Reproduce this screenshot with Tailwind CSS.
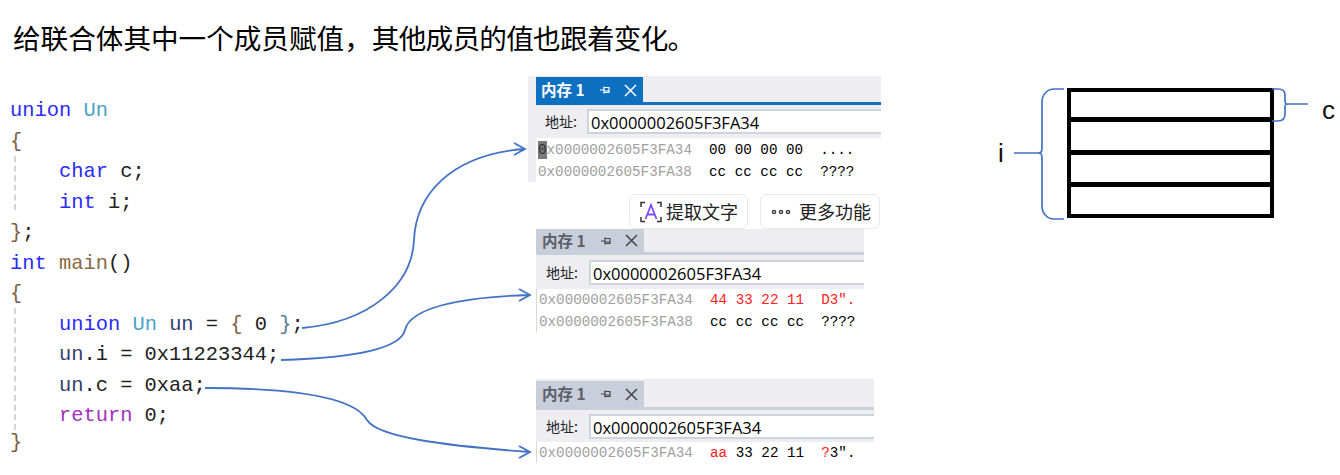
<!DOCTYPE html>
<html lang="zh-CN">
<head>
  <meta charset="UTF-8">
  <script src="https://cdn.jsdelivr.net/npm/@tailwindcss/browser@4"></script>
  <title>联合体</title>
</head>
<body class="bg-white">
  <div class="relative w-[1340px] h-[475px] overflow-hidden font-['Noto_Sans_CJK_SC',sans-serif]">
    <h1 class="h-[76px] pl-[13px] pt-[15px] text-[27.6px] leading-[44px] font-normal text-black">给联合体其中一个成员赋值，<span class="tracking-[-0.7px]">其他成员的值也跟着变化。</span></h1>

    <div class="flex">
      <!-- code -->
      <div class="relative w-[528px] pl-[10px] pt-[20px] font-['Liberation_Mono','Noto_Sans_CJK_SC',monospace] text-[20.4px] leading-[30.55px] text-[#222]">
        <div class="absolute left-[14px] top-[80px] h-[54px] border-l-2 border-dashed border-[#d4d4d4]"></div>
        <div class="absolute left-[14px] top-[232px] h-[122px] border-l-2 border-dashed border-[#d4d4d4]"></div>
        <div class="whitespace-pre"><span class="text-[#2b2bff]">union</span> <span class="text-[#4aa3c4]">Un</span></div>
        <div class="whitespace-pre text-[#7a5c48]">{</div>
        <div class="whitespace-pre">    <span class="text-[#2b2bff]">char</span> c;</div>
        <div class="whitespace-pre">    <span class="text-[#2b2bff]">int</span> i;</div>
        <div class="whitespace-pre"><span class="text-[#7a5c48]">}</span>;</div>
        <div class="whitespace-pre"><span class="text-[#2b2bff]">int</span> <span class="text-[#8a6a45]">main</span>()</div>
        <div class="whitespace-pre text-[#7a5c48]">{</div>
        <div class="whitespace-pre">    <span class="text-[#2b2bff]">union</span> <span class="text-[#4aa3c4]">Un</span> <span class="text-[#34406e]">un</span> = <span class="text-[#7a5c48]">{</span> 0 <span class="text-[#5a7a9a]">}</span>;</div>
        <div class="whitespace-pre">    <span class="text-[#34406e]">un</span>.i = 0x11223344;</div>
        <div class="whitespace-pre">    <span class="text-[#34406e]">un</span>.c = 0xaa;</div>
        <div class="whitespace-pre">    <span class="text-[#a030c0]">return</span> 0;</div>
        <div class="whitespace-pre leading-[22px] text-[#7a5c48]">}</div>
      </div>

      <!-- memory windows -->
      <div class="w-[440px]">
        <div class="w-[353px] h-[106px] bg-[#eeeef2] pl-[8px]">
          <div class="flex h-[29px] border-b-[3px] border-[#0e70c0]">
            <div class="flex items-center w-[107px] h-[26px] mt-px bg-[#0e70c0] pl-[5px] text-white">
              <span class="text-[15.5px] font-bold leading-none">内存 1</span>
              <svg class="ml-[14px]" width="12" height="10" viewBox="0 0 12 10" fill="none" stroke="#fff" stroke-width="1.2"><path d="M1 5h4M5 1.500v7M5 2.500h5v5H5M5 6h5"/></svg>
              <svg class="ml-[13px]" width="13" height="13" viewBox="0 0 13 13" fill="none" stroke="#fff" stroke-width="1.500"><path d="M1 1l11 11M12 1L1 12"/></svg>
            </div>
          </div>
          <div class="flex items-center h-[33px] pl-[9px] text-[#222]">
            <span class="w-[42px] text-[14px]">地址:</span>
            <div class="flex-1 h-[25px] bg-white border-l-2 border-y-2 border-[#cfd3e0] pl-[2px] font-['Open_Sans',sans-serif] text-[16.5px] leading-[23px] text-black">0x0000002605F3FA34</div>
          </div>
          <div class="h-[44px] bg-white pl-[2px] pt-[1px] font-['Liberation_Mono',monospace] text-[14.250px] leading-[22px]">
            <div class="whitespace-pre"><span class="inline-block h-[18px] leading-[18px] text-[#333] bg-[#7a7a7a]">0</span><span class="text-[#a0a0a0]">x0000002605F3FA34</span>  <span class="text-black">00 00 00 00  ....</span></div>
            <div class="whitespace-pre"><span class="text-[#a0a0a0]">0x0000002605F3FA38</span>  <span class="text-black">cc cc cc cc  ????</span></div>
          </div>
        </div>

        <div class="flex justify-end w-[353px] gap-[12px] mt-[12px] pr-[1px] text-[#222]">
          <div class="flex items-center gap-[3px] w-[119px] h-[35px] pl-[9px] bg-white border border-[#e8e8e8] rounded-md text-[18px]">
            <svg width="24" height="24" viewBox="0 0 24 24" fill="none"><path d="M2 7V2.500h4M18 2.500h4V7M2 17v4.500h4M18 21.500h4V17" stroke="#333" stroke-width="1.500"/><path d="M6.500 19L12 5l5.500 14M8.500 14.500h7" stroke="#7c4dff" stroke-width="1.800"/></svg>
            <span>提取文字</span>
          </div>
          <div class="flex items-center gap-[8px] w-[120px] h-[35px] pl-[10px] bg-white border border-[#e8e8e8] rounded-md text-[18px]">
            <svg width="20" height="6" viewBox="0 0 20 6" fill="none" stroke="#444" stroke-width="1.500"><circle cx="3" cy="3" r="1.600"/><circle cx="10" cy="3" r="1.600"/><circle cx="17" cy="3" r="1.600"/></svg>
            <span>更多功能</span>
          </div>
        </div>

        <div class="ml-[8px] w-[328px] h-[103px] bg-[#eeeef2]">
          <div class="flex h-[26px] border-b-[3px] border-[#c9cedb]">
            <div class="flex items-center w-[108px] h-[23px] bg-[#c9cedb] pl-[6px] text-[#5a5f6a]">
              <span class="text-[15.5px] font-bold leading-none">内存 1</span>
              <svg class="ml-[14px]" width="12" height="10" viewBox="0 0 12 10" fill="none" stroke="#444" stroke-width="1.200"><path d="M1 5h4M5 1.500v7M5 2.500h5v5H5M5 6h5"/></svg>
              <svg class="ml-[13px]" width="13" height="13" viewBox="0 0 13 13" fill="none" stroke="#444" stroke-width="1.500"><path d="M1 1l11 11M12 1L1 12"/></svg>
            </div>
          </div>
          <div class="flex items-center h-[34px] pl-[10px] text-[#222]">
            <span class="w-[43px] text-[14px]">地址:</span>
            <div class="flex-1 h-[25px] bg-white border-l-2 border-y-2 border-[#cfd3e0] pl-[2px] font-['Open_Sans',sans-serif] text-[16.5px] leading-[23px] text-black">0x0000002605F3FA34</div>
          </div>
          <div class="h-[43px] bg-white border-l border-[#d8d8d8] pl-[2px] font-['Liberation_Mono',monospace] text-[14.250px] leading-[22px]">
            <div class="whitespace-pre"><span class="text-[#a0a0a0]">0x0000002605F3FA34</span>  <span class="text-[#ff2020]">44 33 22 11  D3″.</span></div>
            <div class="whitespace-pre"><span class="text-[#a0a0a0]">0x0000002605F3FA38</span>  <span class="text-black">cc cc cc cc  ????</span></div>
          </div>
        </div>

        <div class="ml-[8px] w-[338px] h-[84px] mt-[47px] bg-[#eeeef2]">
          <div class="flex h-[31px] pt-[2px] border-b-[3px] border-[#c9cedb]">
            <div class="flex items-center w-[108px] h-[26px] bg-[#c9cedb] pl-[6px] text-[#5a5f6a]">
              <span class="text-[15.5px] font-bold leading-none">内存 1</span>
              <svg class="ml-[14px]" width="12" height="10" viewBox="0 0 12 10" fill="none" stroke="#444" stroke-width="1.200"><path d="M1 5h4M5 1.500v7M5 2.500h5v5H5M5 6h5"/></svg>
              <svg class="ml-[13px]" width="13" height="13" viewBox="0 0 13 13" fill="none" stroke="#444" stroke-width="1.500"><path d="M1 1l11 11M12 1L1 12"/></svg>
            </div>
          </div>
          <div class="flex items-center h-[32px] pl-[10px] text-[#222]">
            <span class="w-[43px] text-[14px]">地址:</span>
            <div class="flex-1 h-[25px] bg-white border-l-2 border-y-2 border-[#cfd3e0] pl-[2px] font-['Open_Sans',sans-serif] text-[16.5px] leading-[23px] text-black">0x0000002605F3FA34</div>
          </div>
          <div class="h-[21px] bg-white border-l border-[#d8d8d8] pl-[2px] font-['Liberation_Mono',monospace] text-[14.250px] leading-[23px] whitespace-pre"><span class="text-[#a0a0a0]">0x0000002605F3FA34</span>  <span class="text-[#ff2020]">aa</span> <span class="text-black">33 22 11  </span><span class="text-[#ff2020]">?</span><span class="text-black">3″.</span></div>
        </div>
      </div>

      <!-- layout diagram -->
      <div class="flex items-start w-[372px] pt-[12px] text-[#111] text-[26px]">
        <span class="w-[40px] mt-[47px] pl-[30px] leading-[36px] font-['Liberation_Sans',sans-serif]">i</span>
        <svg class="shrink-0" width="59" height="132" viewBox="0 0 59 132" fill="none" stroke="#4472c4" stroke-width="1.700"><path d="M6 65h24c3 0 4-1 4-4V14C34 6 40 1 46 1h10M30 65c3 0 4 1 4 4v49c0 8 6 13 12 13h10"/></svg>
        <div class="shrink-0 w-[207px] h-[130px] border-[4px] border-black">
          <div class="h-[30px] border-b-[5px] border-black"></div>
          <div class="h-[33px] border-b-[5px] border-black"></div>
          <div class="h-[32px] border-b-[5px] border-black"></div>
        </div>
        <svg class="shrink-0 -ml-[2px]" width="36" height="34" viewBox="0 0 36 34" fill="none" stroke="#4472c4" stroke-width="1.700"><path d="M0 1h6c5 0 7 2 7 6v6c0 3 1 3 4 3h19M17 16c-3 0-4 0-4 3v7c0 4-2 7-7 7H0"/></svg>
        <span class="ml-[14px] mt-[4px] leading-[36px] font-['Liberation_Sans',sans-serif]">c</span>
      </div>
    </div>

    <!-- arrows over the page -->
    <svg class="absolute left-0 top-0" width="1340" height="475" fill="none" stroke="#4472c4" stroke-width="1.800">
      <path d="M302 328C370 322 412 285 414 240C416 195 450 155 524 149M514 143l11 6-11 6"/>
      <path d="M281 360C350 358 400 350 405 330C410 308 460 297 529 295M519 289l11 6-11 6"/>
      <path d="M205 388C300 388 355 398 367 420C378 438 450 446 529 452M519 446l11 6-11 6"/>
    </svg>
  </div>
</body>
</html>
